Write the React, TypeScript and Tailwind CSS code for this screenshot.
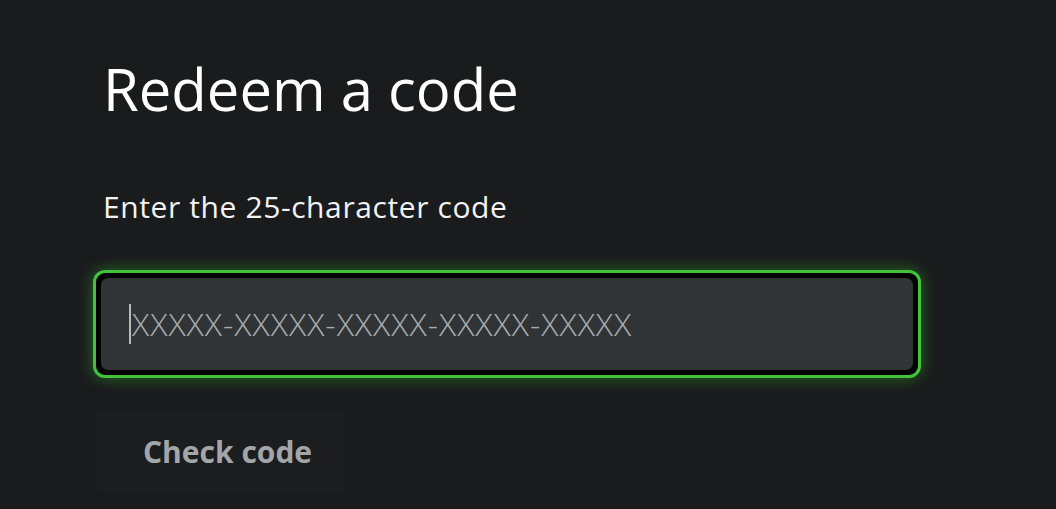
const App = () => {
  return (
    <div
      className="w-full h-[509px] overflow-hidden bg-[#1a1b1d] pl-[103px] pt-[60px]"
      style={{ fontFamily: '"Open Sans", "Noto Sans", sans-serif' }}
    >
      <h1 className="text-[58px] leading-[58px] text-white font-normal">
        Redeem a code
      </h1>

      <p className="mt-[74px] text-[30px] leading-[30px] text-[#f2f2f2] tracking-[0.6px]">
        Enter the 25-character code
      </p>

      {/* focused input with green glow ring */}
      <div className="mt-[48px] -ml-[10px] w-[828px] h-[108px] rounded-[12px] border-[3px] border-[#42c33c] bg-black p-[5px] shadow-[0_0_16px_rgba(50,190,40,0.5)]">
        <div className="h-full rounded-[7px] bg-[#303436] flex items-center pl-[28px]">
          <span className="w-[2px] h-[40px] bg-[#b8bbbd]" />
          <span className="ml-[1px] text-[32px] font-light text-[#a9acae] tracking-[1px]">
            XXXXX-XXXXX-XXXXX-XXXXX-XXXXX
          </span>
        </div>
      </div>

      <button className="mt-[33px] -ml-[6px] w-[248px] h-[80px] bg-[#1c1d1f] flex items-center pl-[46px] text-[30px] font-bold text-[#a3a6a8]">
        Check code
      </button>
    </div>
  );
};

export default App;
